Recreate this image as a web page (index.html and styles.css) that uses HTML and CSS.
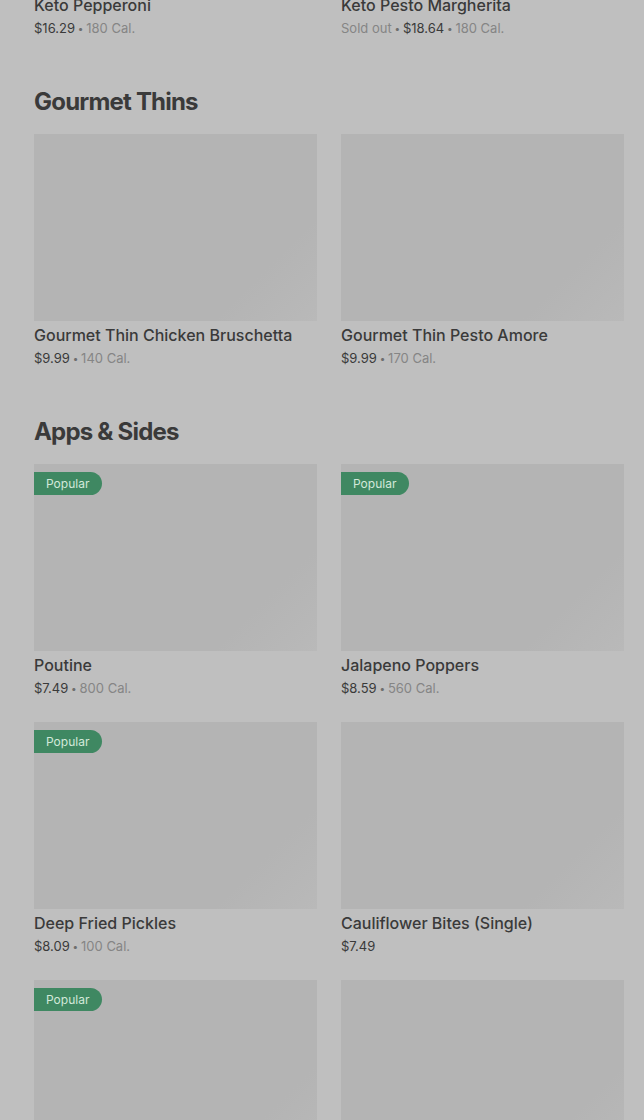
FILE: index.html
```html
<!DOCTYPE html>
<html>
<head>
<meta charset="utf-8">
<link rel="stylesheet" href="styles.css">
</head>
<body>
<div class="page">
  <section class="section first">
    <div class="grid">
      <div class="card">
        <div class="title">Keto Pepperoni</div>
        <div class="meta"><span class="price">$16.29</span><span class="dot"> • </span><span class="cal">180 Cal.</span></div>
      </div>
      <div class="card">
        <div class="title">Keto Pesto Margherita</div>
        <div class="meta"><span class="cal">Sold out</span><span class="dot"> • </span><span class="price">$18.64</span><span class="dot"> • </span><span class="cal">180 Cal.</span></div>
      </div>
    </div>
  </section>

  <section class="section">
    <h2 class="heading">Gourmet Thins</h2>
    <div class="grid">
      <div class="card">
        <div class="img"></div>
        <div class="title">Gourmet Thin Chicken Bruschetta</div>
        <div class="meta"><span class="price">$9.99</span><span class="dot"> • </span><span class="cal">140 Cal.</span></div>
      </div>
      <div class="card">
        <div class="img"></div>
        <div class="title">Gourmet Thin Pesto Amore</div>
        <div class="meta"><span class="price">$9.99</span><span class="dot"> • </span><span class="cal">170 Cal.</span></div>
      </div>
    </div>
  </section>

  <section class="section">
    <h2 class="heading">Apps &amp; Sides</h2>
    <div class="grid">
      <div class="card">
        <div class="img"><span class="badge">Popular</span></div>
        <div class="title">Poutine</div>
        <div class="meta"><span class="price">$7.49</span><span class="dot"> • </span><span class="cal">800 Cal.</span></div>
      </div>
      <div class="card">
        <div class="img"><span class="badge">Popular</span></div>
        <div class="title">Jalapeno Poppers</div>
        <div class="meta"><span class="price">$8.59</span><span class="dot"> • </span><span class="cal">560 Cal.</span></div>
      </div>
      <div class="card">
        <div class="img"><span class="badge">Popular</span></div>
        <div class="title">Deep Fried Pickles</div>
        <div class="meta"><span class="price">$8.09</span><span class="dot"> • </span><span class="cal">100 Cal.</span></div>
      </div>
      <div class="card">
        <div class="img"></div>
        <div class="title">Cauliflower Bites (Single)</div>
        <div class="meta"><span class="price">$7.49</span></div>
      </div>
      <div class="card">
        <div class="img"><span class="badge">Popular</span></div>
      </div>
      <div class="card">
        <div class="img"></div>
      </div>
    </div>
  </section>
</div>
</body>
</html>
```
FILE: styles.css
```css
html, body {
  margin: 0;
  padding: 0;
  background: #bfbfbf;
  overflow: hidden;
}
body {
  font-family: Inter, "Liberation Sans", sans-serif;
  color: #333333;
}
.page {
  width: 644px;
  height: 1120px;
  overflow: hidden;
  padding: 0 20px 0 34px;
  box-sizing: border-box;
}
.section {
  padding-top: 49px;
}
.section.first {
  padding-top: 0;
  margin-top: -9px;
}
.heading {
  margin: 0 0 16px 0;
  font-size: 24px;
  line-height: 32px;
  font-weight: 700;
  letter-spacing: -0.8px;
  color: #3a3a3a;
}
.grid {
  display: grid;
  grid-template-columns: 283px 283px;
  column-gap: 24px;
  row-gap: 25px;
}
.img {
  position: relative;
  height: 187px;
  background: linear-gradient(135deg, #b4b4b4 0%, #b4b4b4 78%, #b9b9b9 100%);
}
.badge {
  position: absolute;
  left: 0;
  top: 8px;
  height: 23px;
  line-height: 23px;
  padding: 0 13px 0 12px;
  background: #3f8862;
  color: #d3e8da;
  font-size: 12px;
  border-radius: 0 12px 12px 0;
}
.title {
  margin-top: 4px;
  font-size: 16px;
  line-height: 20px;
  font-weight: 500;
  color: #3a3a3a;
}
.meta {
  margin-top: 4px;
  font-size: 13px;
  line-height: 18px;
}
.price {
  color: #3a3a3a;
}
.dot {
  color: #6e6e6e;
  font-size: 10px;
  vertical-align: 1px;
}
.cal {
  color: #858585;
}
```
